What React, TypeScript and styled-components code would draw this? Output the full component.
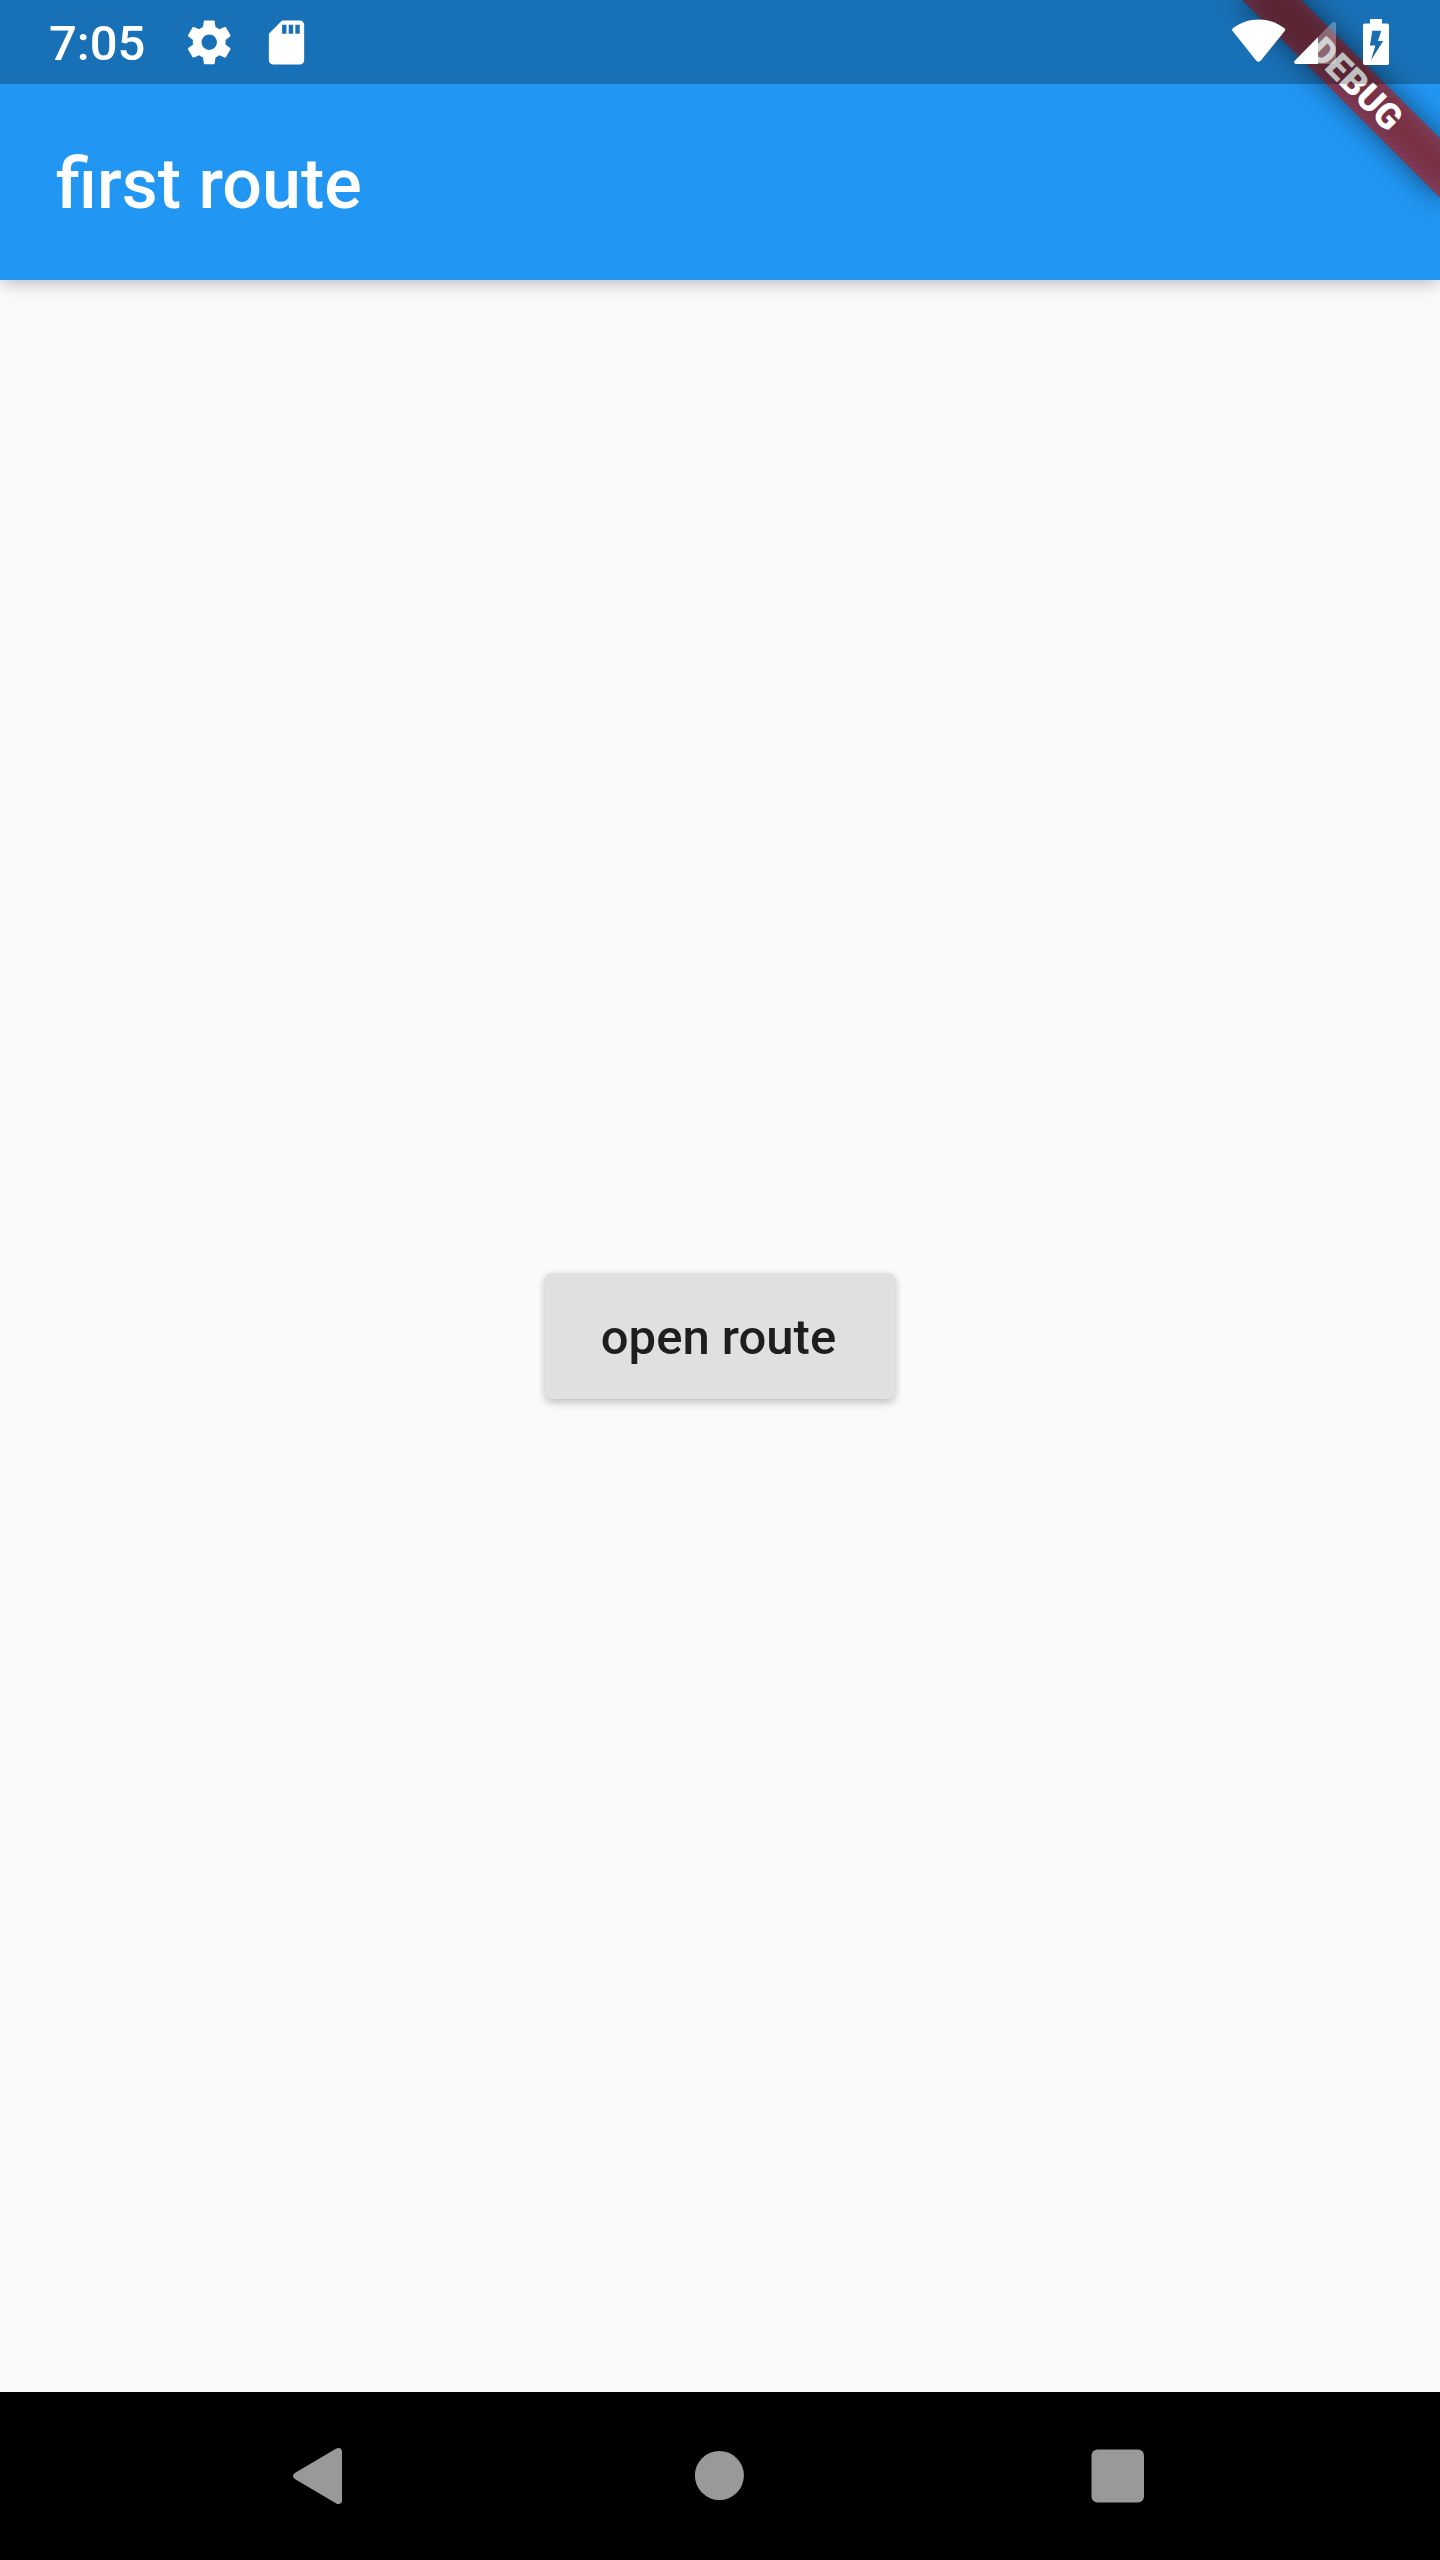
import React from "react";
import styled, { createGlobalStyle } from "styled-components";

const GlobalStyle = createGlobalStyle`
  html, body { margin: 0; padding: 0; background: #fafafa; }
  * { box-sizing: border-box; }
`;

const Screen = styled.div`
  position: relative;
  display: flex;
  flex-direction: column;
  width: 1440px;
  height: 2560px;
  overflow: hidden;
  background: #fafafa;
  font-family: Roboto, "Noto Sans", sans-serif;
`;

const AppBar = styled.header`
  display: flex;
  align-items: center;
  height: 280px;
  flex: none;
  padding: 88px 56px 0;
  background: #2196f3;
  box-shadow: 0 5px 17px -2px rgba(0, 0, 0, 0.22), 0 1px 14px rgba(0, 0, 0, 0.07);
`;

const Title = styled.h1`
  margin: 0;
  color: #fff;
  font-size: 70px;
  font-weight: 500;
  line-height: 82px;
  white-space: nowrap;
`;

const Content = styled.main`
  display: flex;
  flex: 1;
  align-items: center;
  justify-content: center;
`;

const RaisedButton = styled.button`
  width: 350px;
  height: 126px;
  padding: 4px 3px 0 0;
  border: 0;
  border-radius: 7px;
  background: #e0e0e0;
  color: #1e1e1e;
  font: 500 49px/58px Roboto, "Noto Sans", sans-serif;
  text-align: center;
  white-space: nowrap;
  box-shadow: 0 4px 8px rgba(0, 0, 0, 0.2), 0 1px 8px rgba(0, 0, 0, 0.06);
`;

const NavBar = styled.nav`
  display: flex;
  align-items: center;
  justify-content: center;
  gap: 239px;
  height: 168px;
  flex: none;
  background: #000;
`;

const NavIcon = styled.svg`
  display: block;
  width: 140px;
  height: 168px;
  fill: #999;
`;

const DebugBanner = styled.div`
  position: absolute;
  top: 98px;
  left: 1300px;
  display: flex;
  align-items: center;
  justify-content: center;
  width: 280px;
  height: 42px;
  transform: rotate(45deg);
  transform-origin: 140px -98px;
  color: #fff;
  font-size: 35.7px;
  font-weight: 900;
  line-height: 42px;

  &::before {
    content: "";
    position: absolute;
    inset: 0;
    background: rgba(0, 0, 0, 0.5);
    filter: blur(13.9px);
  }
`;

const BannerLabel = styled.span`
  position: relative;
  width: 100%;
  height: 42px;
  background: rgba(183, 28, 28, 0.627);
  text-align: center;
`;

const StatusBar = styled.div`
  position: absolute;
  top: 0;
  left: 0;
  display: flex;
  justify-content: space-between;
  width: 1440px;
  height: 84px;
  padding: 0 51px 0 48px;
  background: rgba(0, 0, 0, 0.25);
  color: #fff;
`;

const StatusGroup = styled.div`
  display: flex;
  align-items: center;
`;

const Clock = styled.span`
  width: 135px;
  padding: 4px 0 0 1px;
  font-size: 49px;
  font-weight: 500;
  line-height: 58px;
`;

const StatusIcon = styled.svg<{ $w: number; $h: number; $gap?: number }>`
  display: block;
  flex: none;
  width: ${(p) => p.$w}px;
  height: ${(p) => p.$h}px;
  margin-left: ${(p) => p.$gap ?? 0}px;
  fill: #fff;
`;

export default function App() {
  return (
    <>
      <GlobalStyle />
      <Screen>
        <AppBar>
          <Title>first route</Title>
        </AppBar>
        <Content>
          <RaisedButton>open route</RaisedButton>
        </Content>
        <NavBar>
          <NavIcon viewBox="0 0 140 168">
            <path d="M23.800 81L65.300 56.600C68.500 54.900 71 56.800 71 59.500V108.500C71 111.200 68.500 113.100 65.300 111.400L23.800 87C21.400 85.300 21.400 82.700 23.800 81Z" />
          </NavIcon>
          <NavIcon viewBox="0 0 140 168">
            <circle cx="69.400" cy="83.500" r="24.500" />
          </NavIcon>
          <NavIcon viewBox="0 0 140 168">
            <rect x="62.500" y="57.500" width="52.500" height="53" rx="6" />
          </NavIcon>
        </NavBar>
        <DebugBanner>
          <BannerLabel>DEBUG</BannerLabel>
        </DebugBanner>
        <StatusBar>
          <StatusGroup>
            <Clock>7:05</Clock>
            <StatusIcon viewBox="0 0 24 24" $w={52.5} $h={52.5}>
              <path d="M19.43 12.98c.04-.32.07-.64.07-.98s-.03-.66-.07-.98l2.11-1.65c.19-.15.24-.42.12-.64l-2-3.46c-.12-.22-.39-.3-.61-.22l-2.49 1c-.52-.4-1.08-.73-1.69-.98l-.38-2.65C14.46 2.18 14.25 2 14 2h-4c-.25 0-.46.18-.49.42l-.38 2.65c-.61.25-1.17.59-1.69.98l-2.49-1c-.23-.09-.49 0-.61.22l-2 3.46c-.13.22-.07.49.12.64l2.11 1.65c-.04.32-.07.65-.07.98s.03.66.07.98l-2.11 1.65c-.19.15-.24.42-.12.64l2 3.46c.12.22.39.3.61.22l2.49-1c.52.4 1.08.73 1.69.98l.38 2.65c.03.24.24.42.49.42h4c.25 0 .46-.18.49-.42l.38-2.65c.61-.25 1.17-.59 1.69-.98l2.49 1c.23.09.49 0 .61-.22l2-3.46c.12-.22.07-.49-.12-.64l-2.11-1.65zM12 15.500c-1.930 0-3.500-1.570-3.500-3.500s1.570-3.500 3.500-3.500 3.500 1.570 3.500 3.500-1.570 3.500-3.500 3.500z" />
            </StatusIcon>
            <StatusIcon viewBox="0 0 24 24" $w={53} $h={53} $gap={24}>
              <path d="M18 2h-8L4.020 8 4 20c0 1.100.9 2 2 2h12c1.100 0 2-.9 2-2V4c0-1.100-.9-2-2-2zm-6 6h-2V4h2v4zm3 0h-2V4h2v4zm3 0h-2V4h2v4z" />
            </StatusIcon>
          </StatusGroup>
          <StatusGroup>
            <StatusIcon viewBox="0 0 54 84" $w={54} $h={84}>
              <path d="M0.400 30.800Q-0.400 29.400 0.900 28.300C8.500 22.800 17 19.500 26.700 19.500S45 22.800 52.400 28.300Q53.700 29.400 52.900 30.800L28.700 60.700Q26.500 62.900 24.300 60.700Z" />
            </StatusIcon>
            <StatusIcon viewBox="0 0 42 84" $w={42} $h={84} $gap={8}>
              <path
                opacity="0.300"
                d="M24 37L37.700 23Q42 20 42 25V61Q42 64 39 64H24Z"
              />
              <path d="M24 37V64H2.500Q-1.500 63.500 1 60.500Z" />
            </StatusIcon>
            <StatusIcon viewBox="0 0 26 84" $w={26} $h={84} $gap={27}>
              <path
                fillRule="evenodd"
                d="M7 19H19V23.500H24Q26 23.500 26 25.500V63Q26 65 24 65H2Q0 65 0 63V25.500Q0 23.500 2 23.500H7ZM9.300 30.700L7 45.500H12.400L8 60.300L20.200 41H15L18.300 30.700Z"
              />
            </StatusIcon>
          </StatusGroup>
        </StatusBar>
      </Screen>
    </>
  );
}
